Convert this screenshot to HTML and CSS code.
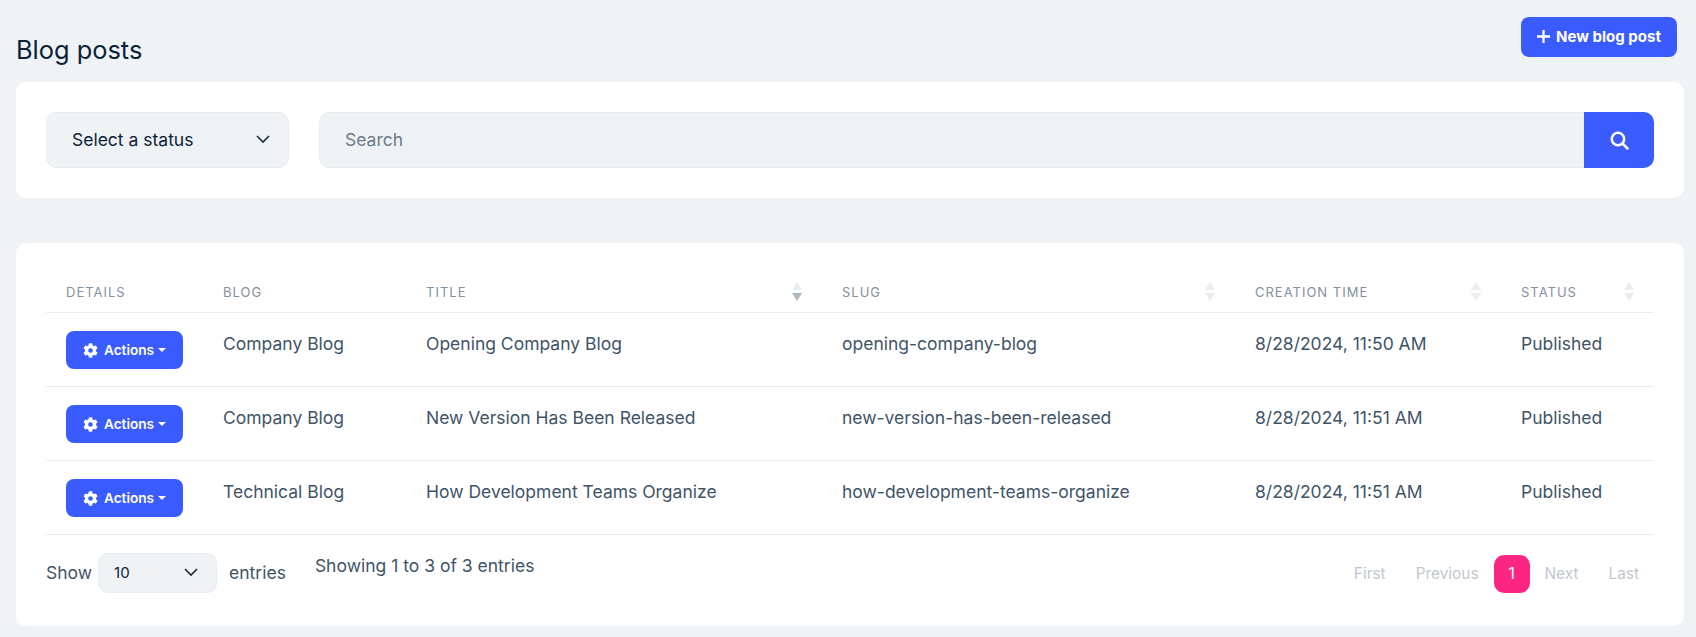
FILE: index.html
```html
<!DOCTYPE html>
<html lang="en">
<head>
  <meta charset="UTF-8">
  <title>Blog posts</title>
  <link rel="stylesheet" href="styles.css">
</head>
<body>

<div class="page-head">
  <h1>Blog posts</h1>
  <button class="btn btn-new">
    <svg width="13" height="13" viewBox="0 0 13 13"><path d="M6.500 0v13M0 6.500h13" stroke="#fff" stroke-width="2.300" fill="none"/></svg>
    New blog post
  </button>
</div>

<div class="card filter-card">
  <div class="select status-select">
    <span>Select a status</span>
    <svg class="chevron" width="16" height="16" viewBox="0 0 16 16"><path d="M2 5 8 11 14 5" stroke="#1e2a35" stroke-width="1.600" fill="none"/></svg>
  </div>
  <div class="search-group">
    <div class="search-input">Search</div>
    <button class="search-btn">
      <svg width="19" height="19" viewBox="0 0 19 19"><circle cx="8" cy="8" r="6.200" stroke="#fff" stroke-width="2.500" fill="none"/><path d="M12.500 12.500l5 5" stroke="#fff" stroke-width="2.500" stroke-linecap="round"/></svg>
    </button>
  </div>
</div>

<div class="card table-card">
  <table>
    <thead>
      <tr>
        <th class="col-details">Details</th>
        <th class="col-blog">Blog</th>
        <th class="col-title sortable">Title<span class="sort"><i class="up"></i><i class="down active"></i></span></th>
        <th class="col-slug sortable">Slug<span class="sort"><i class="up"></i><i class="down"></i></span></th>
        <th class="col-time sortable">Creation time<span class="sort"><i class="up"></i><i class="down"></i></span></th>
        <th class="col-status sortable">Status<span class="sort"><i class="up"></i><i class="down"></i></span></th>
      </tr>
    </thead>
    <tbody>
      <tr>
        <td><button class="btn btn-actions"><svg class="gear" width="15" height="15" viewBox="0 0 512 512"><path fill="#fff" d="M487 316l-42-25a192 192 0 0 0 0-70l42-25c5-3 7-8 5-14-11-35-30-67-54-93-4-4-10-5-14-2l-43 24c-18-15-38-27-60-35V28c0-6-4-10-9-11-37-8-74-8-109 0-5 1-9 5-9 11v49c-22 8-42 20-60 35l-42-24c-5-3-11-2-15 2-24 26-43 58-54 93-2 6 0 11 5 14l42 25a192 192 0 0 0 0 70l-42 25c-5 3-7 8-5 14 11 35 30 67 54 93 4 4 10 5 15 2l42-24c18 15 38 27 60 35v49c0 6 4 10 9 11 37 8 74 8 109 0 5-1 9-5 9-11v-49c22-8 42-20 60-35l43 24c4 3 10 2 14-2 24-26 43-58 54-93 2-6 0-11-5-14zM256 336a80 80 0 1 1 0-160 80 80 0 0 1 0 160z"/></svg>Actions<span class="caret"></span></button></td>
        <td>Company Blog</td>
        <td>Opening Company Blog</td>
        <td>opening-company-blog</td>
        <td>8/28/2024, 11:50 AM</td>
        <td>Published</td>
      </tr>
      <tr>
        <td><button class="btn btn-actions"><svg class="gear" width="15" height="15" viewBox="0 0 512 512"><path fill="#fff" d="M487 316l-42-25a192 192 0 0 0 0-70l42-25c5-3 7-8 5-14-11-35-30-67-54-93-4-4-10-5-14-2l-43 24c-18-15-38-27-60-35V28c0-6-4-10-9-11-37-8-74-8-109 0-5 1-9 5-9 11v49c-22 8-42 20-60 35l-42-24c-5-3-11-2-15 2-24 26-43 58-54 93-2 6 0 11 5 14l42 25a192 192 0 0 0 0 70l-42 25c-5 3-7 8-5 14 11 35 30 67 54 93 4 4 10 5 15 2l42-24c18 15 38 27 60 35v49c0 6 4 10 9 11 37 8 74 8 109 0 5-1 9-5 9-11v-49c22-8 42-20 60-35l43 24c4 3 10 2 14-2 24-26 43-58 54-93 2-6 0-11-5-14zM256 336a80 80 0 1 1 0-160 80 80 0 0 1 0 160z"/></svg>Actions<span class="caret"></span></button></td>
        <td>Company Blog</td>
        <td>New Version Has Been Released</td>
        <td>new-version-has-been-released</td>
        <td>8/28/2024, 11:51 AM</td>
        <td>Published</td>
      </tr>
      <tr>
        <td><button class="btn btn-actions"><svg class="gear" width="15" height="15" viewBox="0 0 512 512"><path fill="#fff" d="M487 316l-42-25a192 192 0 0 0 0-70l42-25c5-3 7-8 5-14-11-35-30-67-54-93-4-4-10-5-14-2l-43 24c-18-15-38-27-60-35V28c0-6-4-10-9-11-37-8-74-8-109 0-5 1-9 5-9 11v49c-22 8-42 20-60 35l-42-24c-5-3-11-2-15 2-24 26-43 58-54 93-2 6 0 11 5 14l42 25a192 192 0 0 0 0 70l-42 25c-5 3-7 8-5 14 11 35 30 67 54 93 4 4 10 5 15 2l42-24c18 15 38 27 60 35v49c0 6 4 10 9 11 37 8 74 8 109 0 5-1 9-5 9-11v-49c22-8 42-20 60-35l43 24c4 3 10 2 14-2 24-26 43-58 54-93 2-6 0-11-5-14zM256 336a80 80 0 1 1 0-160 80 80 0 0 1 0 160z"/></svg>Actions<span class="caret"></span></button></td>
        <td>Technical Blog</td>
        <td>How Development Teams Organize</td>
        <td>how-development-teams-organize</td>
        <td>8/28/2024, 11:51 AM</td>
        <td>Published</td>
      </tr>
    </tbody>
  </table>

  <div class="table-foot">
    <div class="length">
      <span>Show</span>
      <div class="select length-select">
        <span>10</span>
        <svg class="chevron" width="16" height="16" viewBox="0 0 16 16"><path d="M2 5 8 11 14 5" stroke="#1e2a35" stroke-width="1.600" fill="none"/></svg>
      </div>
      <span class="entries">entries</span>
    </div>
    <div class="info">Showing 1 to 3 of 3 entries</div>
    <div class="pagination">
      <a>First</a>
      <a>Previous</a>
      <a class="current">1</a>
      <a>Next</a>
      <a>Last</a>
    </div>
  </div>
</div>

</body>
</html>
```

FILE: styles.css
```css
* {
  box-sizing: border-box;
}
body {
  margin: 0;
  padding: 0 12px 0 16px;
  background: #eff3f6;
  color: #3f5468;
  font-family: Inter, "Liberation Sans", sans-serif;
  font-size: 17.500px;
}
.page-head {
  display: flex;
  justify-content: space-between;
  align-items: flex-start;
  height: 82px;
  padding-top: 17px;
}
h1 {
  margin: 17px 0 0;
  font-size: 25.400px;
  line-height: 32px;
  font-weight: 400;
  color: #0b2239;
}
.btn {
  display: inline-flex;
  align-items: center;
  justify-content: center;
  border: none;
  background: #3a5cff;
  color: #fff;
  font-family: inherit;
  font-weight: 600;
}
.btn-new {
  width: 156px;
  height: 40px;
  margin-right: 7px;
  padding-bottom: 2px;
  gap: 6px;
  border-radius: 8px;
  font-size: 15px;
  font-weight: 700;
}
.card {
  background: #fff;
  border-radius: 10px;
}
.filter-card {
  display: flex;
  gap: 30px;
  height: 116px;
  padding: 30px;
  margin-bottom: 45px;
}
.select {
  display: flex;
  align-items: center;
  justify-content: space-between;
  background: #eff3f6;
  border: 1px solid #e9edf3;
  color: #0b2239;
}
.status-select {
  width: 243px;
  height: 56px;
  padding: 0 17px 2px 25px;
  border-radius: 10px;
}
.search-group {
  flex: 1;
  display: flex;
}
.search-input {
  flex: 1;
  display: flex;
  align-items: center;
  padding: 0 25px 2px;
  background: #eff3f6;
  border: 1px solid #e9edf3;
  border-right: none;
  border-radius: 10px 0 0 10px;
  color: #6b7a89;
}
.search-btn {
  width: 70px;
  border: none;
  border-radius: 0 10px 10px 0;
  background: #3a5cff;
  display: flex;
  align-items: center;
  justify-content: center;
}
.table-card {
  height: 383px;
  padding: 22px 30px 0;
}
table {
  width: 100%;
  border-collapse: collapse;
  table-layout: fixed;
}
th {
  position: relative;
  height: 47px;
  padding: 8px 20px 0;
  border-bottom: 1px solid #e9ecf4;
  text-align: left;
  font-size: 13px;
  font-weight: 400;
  letter-spacing: 1px;
  text-transform: uppercase;
  color: #84919f;
}
.col-details { width: 157px; }
.col-blog { width: 203px; }
.col-title { width: 416px; }
.col-slug { width: 413px; }
.col-time { width: 266px; }
.sort {
  position: absolute;
  right: 20px;
  top: 17px;
  display: flex;
  flex-direction: column;
  gap: 3px;
}
.sort i {
  display: block;
  width: 0;
  height: 0;
  border-left: 5px solid transparent;
  border-right: 5px solid transparent;
}
.sort .up {
  border-bottom: 8px solid #e9edf1;
}
.sort .down {
  border-top: 8px solid #e9edf1;
}
.sort .down.active {
  border-top-color: #aeb8c2;
}
td {
  height: 74px;
  padding: 0 20px 11px;
  border-bottom: 1px solid #e9edf3;
}
td:first-child {
  padding: 2px 20px 0;
}
.btn-actions {
  width: 117px;
  height: 38px;
  gap: 6px;
  border-radius: 8px;
  font-size: 13.600px;
}
.caret {
  width: 0;
  height: 0;
  border-left: 4px solid transparent;
  border-right: 4px solid transparent;
  border-top: 4px solid #fff;
  margin-left: -2px;
}
.table-foot {
  display: flex;
  align-items: flex-start;
  padding-top: 18px;
}
.length {
  display: flex;
  align-items: center;
  gap: 6px;
  height: 40px;
  padding-bottom: 1px;
}
.length-select {
  width: 119px;
  height: 40px;
  flex-shrink: 0;
  margin-bottom: -1px;
  padding: 0 17px 1px 15px;
  border-radius: 10px;
  font-size: 15px;
}
.entries {
  margin-left: 6px;
}
.info {
  margin-left: 29px;
  line-height: 24px;
  padding-top: 1px;
}
.pagination {
  margin-left: auto;
  display: flex;
  align-items: center;
  height: 38px;
  margin-top: 2px;
  font-size: 15.400px;
  color: #bfc8d1;
}
.pagination a {
  padding: 0 15px;
}
.pagination .current {
  width: 36px;
  height: 38px;
  padding: 0;
  display: flex;
  align-items: center;
  justify-content: center;
  border-radius: 10px;
  background: #fb2682;
  color: #fff;
}
```
